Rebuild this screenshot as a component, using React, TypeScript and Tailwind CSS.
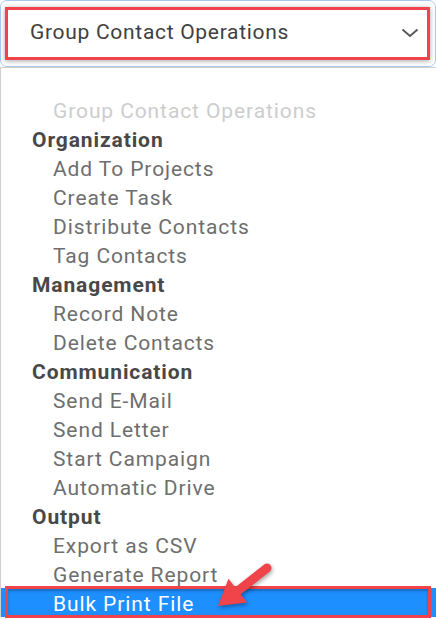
import React from "react";

type Row = { label: string; kind: "disabled" | "header" | "item" | "selected" };

const rows: Row[] = [
  { label: "Group Contact Operations", kind: "disabled" },
  { label: "Organization", kind: "header" },
  { label: "Add To Projects", kind: "item" },
  { label: "Create Task", kind: "item" },
  { label: "Distribute Contacts", kind: "item" },
  { label: "Tag Contacts", kind: "item" },
  { label: "Management", kind: "header" },
  { label: "Record Note", kind: "item" },
  { label: "Delete Contacts", kind: "item" },
  { label: "Communication", kind: "header" },
  { label: "Send E-Mail", kind: "item" },
  { label: "Send Letter", kind: "item" },
  { label: "Start Campaign", kind: "item" },
  { label: "Automatic Drive", kind: "item" },
  { label: "Output", kind: "header" },
  { label: "Export as CSV", kind: "item" },
  { label: "Generate Report", kind: "item" },
  { label: "Bulk Print File", kind: "selected" },
];

function RowView({ row }: { row: Row }) {
  if (row.kind === "header") {
    return (
      <div className="h-[29px] flex items-center pt-[4px] pl-[31px] text-[21px] tracking-[0.9px] font-bold text-[#484848]">
        {row.label}
      </div>
    );
  }
  if (row.kind === "selected") {
    return (
      <div className="h-[29px] flex items-center pt-[4px] pl-[52px] text-[21px] tracking-[0.9px] text-white bg-[#1e8fff]">
        {row.label}
      </div>
    );
  }
  return (
    <div
      className={
        "h-[29px] flex items-center pt-[4px] pl-[52px] text-[21px] tracking-[0.9px] " +
        (row.kind === "disabled" ? "text-[#cdcdcd]" : "text-[#6e6e6e]")
      }
    >
      {row.label}
    </div>
  );
}

export default function App() {
  return (
    <div
      className="relative w-[436px] h-[619px] bg-white overflow-hidden"
      style={{ fontFamily: "Roboto, 'Liberation Sans', sans-serif" }}
    >
      {/* select box */}
      <div className="h-[67px] w-[436px] border border-[#a9c9ea] rounded-[7px] flex items-center pl-[4px] pr-[5px]">
        <div className="h-[53px] w-full border-[3px] border-[#f2434a] shadow-[0_1px_5px_rgba(0,0,0,0.35)] flex items-center justify-between pl-[22px] pr-[8px]">
          <span className="text-[21px] tracking-[0.7px] text-[#404040] leading-none pb-[2px]">Group Contact Operations</span>
          <svg width="18" height="10" viewBox="0 0 18 10" className="mb-[2px]">
            <polyline points="1.5,1.5 9,8 16.5,1.5" fill="none" stroke="#555" strokeWidth="1.8" />
          </svg>
        </div>
      </div>

      {/* dropdown list */}
      <div className="border-t border-l border-[#cfcfcf] pt-[27px]">
        {rows.map((r) => (
          <RowView key={r.label} row={r} />
        ))}
      </div>

      {/* red outline around selected row */}
      <div className="absolute left-[5px] top-[586px] w-[426px] h-[32px] border-[3px] border-[#f2434a] shadow-[inset_0_2px_3px_rgba(0,0,0,0.25)]" />

      {/* arrow */}
      <svg
        className="absolute left-[205px] top-[560px]"
        width="80"
        height="56"
        viewBox="0 0 80 56"
        style={{ filter: "drop-shadow(1px 2px 2px rgba(0,0,0,0.35))" }}
      >
        <line x1="62" y1="8" x2="33" y2="30.7" stroke="#f0434a" strokeWidth="9" strokeLinecap="round" />
        <polygon points="13,46 42,42.5 23.5,18.8" fill="#f0434a" />
      </svg>
    </div>
  );
}
